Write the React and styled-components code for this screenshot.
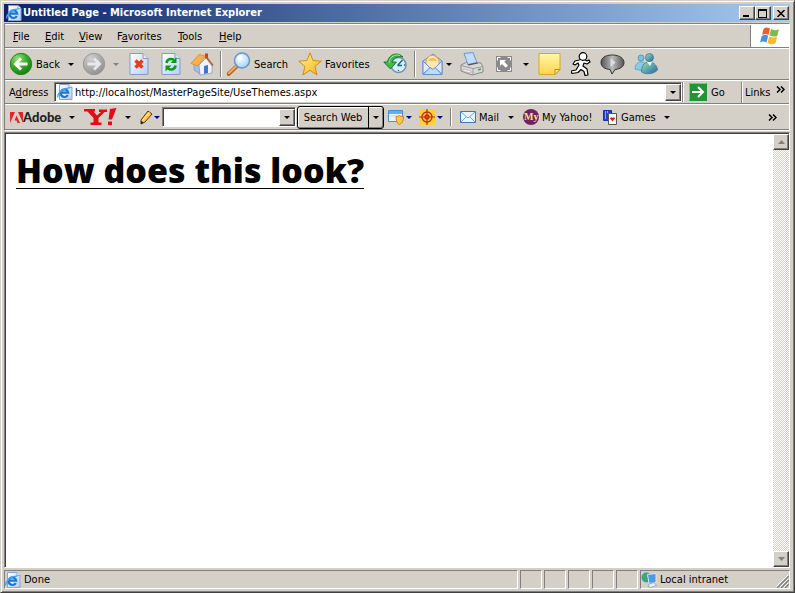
import React from "react";
import styled, { createGlobalStyle, css } from "styled-components";

const Global = createGlobalStyle`
  * { box-sizing: border-box; }
  body { margin: 0; background: #d4d0c8; }
  body, button, input { font-family: "DejaVu Sans Condensed", "DejaVu Sans", sans-serif; font-size: 11px; color: #000; }
  button { padding: 0; margin: 0; border: 0; background: transparent; cursor: default; white-space: nowrap; }
  svg { display: block; flex: none; }
`;

const raised = css`
  border: 1px solid;
  border-color: #fff #404040 #404040 #fff;
  box-shadow: inset -1px -1px 0 #808080;
  background: #d4d0c8;
`;

const Window = styled.div`
  display: flex;
  flex-direction: column;
  height: 100vh;
  padding: 3px 4px 2px 3px;
  background: #d4d0c8;
  border: 1px solid;
  border-color: #d4d0c8 #404040 #404040 #d4d0c8;
  box-shadow: inset 1px 1px 0 #fff, inset -1px -1px 0 #808080;
`;

const TitleBar = styled.header`
  display: flex;
  align-items: center;
  flex: none;
  height: 18px;
  padding: 0 1px 0 2px;
  gap: 1px;
  color: #fff;
  background: linear-gradient(90deg, #0a246a, #a6caf0);
`;

const Title = styled.h1`
  flex: 1;
  margin: 0;
  font-size: 11px;
  line-height: 18px;
  font-weight: bold;
  white-space: nowrap;
`;

const CaptionButton = styled.button`
  ${raised}
  display: flex;
  align-items: center;
  justify-content: center;
  width: 16px;
  height: 14px;
  margin-left: ${(p) => (p.$apart ? 2 : 0)}px;
  margin-right: -1px;
  &:last-child { margin-right: 0; }
`;

const Bands = styled.div`
  flex: none;
  margin-top: 1px;
  border: 1px solid;
  border-color: #808080 #fff #fff #808080;
`;

const Band = styled.div`
  display: flex;
  align-items: center;
  height: ${(p) => p.$h}px;
  padding-left: ${(p) => p.$pad ?? 4}px;
  border-top: 1px solid #fff;
  border-bottom: 1px solid #808080;
  overflow: hidden;
`;

const MenuButton = styled.button`
  height: 20px;
  padding: 0 8px;
  text-align: left;
  width: ${(p) => p.$w}px;
`;

const Flag = styled.div`
  display: flex;
  align-items: center;
  justify-content: center;
  align-self: stretch;
  width: 39px;
  margin-left: auto;
  background: #fff;
  border-left: 1px solid #808080;
`;

const Tool = styled.button`
  display: flex;
  align-items: center;
  flex: none;
  gap: ${(p) => p.$gap ?? 3}px;
  width: ${(p) => p.$w}px;
  height: 26px;
`;

const ToolLabel = styled.span`
  flex: ${(p) => (p.$grow ? 1 : "none")};
  text-align: left;
`;

const Rule = styled.span`
  flex: none;
  width: 2px;
  height: ${(p) => p.$h || 26}px;
  margin-right: ${(p) => p.$after}px;
  border-left: 1px solid #808080;
  border-right: 1px solid #fff;
`;

const Caret = styled.span`
  flex: none;
  width: 0;
  height: 0;
  margin-left: ${(p) => p.$before || 0}px;
  margin-right: ${(p) => p.$after || 0}px;
  border: 3px solid transparent;
  border-bottom-width: 0;
  border-top-color: ${(p) => p.$color || "#000"};
`;

const AddressLabel = styled.label`
  flex: none;
  width: 45px;
`;

const Field = styled.div`
  display: flex;
  align-items: center;
  flex: ${(p) => (p.$w ? "none" : 1)};
  width: ${(p) => (p.$w ? p.$w + "px" : "auto")};
  min-width: 0;
  height: 20px;
  padding-left: 2px;
  background: #fff;
  border: 1px solid;
  border-color: #808080 #fff #fff #808080;
  box-shadow: inset 1px 1px 0 #404040;
`;

const TextInput = styled.input`
  flex: 1;
  min-width: 0;
  height: 16px;
  padding: 0 2px;
  border: 0;
  outline: 0;
  background: transparent;
`;

const DropButton = styled.button`
  ${raised}
  display: flex;
  align-items: center;
  justify-content: center;
  flex: none;
  width: 16px;
  height: 17px;
`;

const LinksButton = styled.button`
  display: flex;
  justify-content: space-between;
  width: 48px;
  height: 21px;
  padding: 4px 4px 0 3px;
  border-left: 1px solid #808080;
  box-shadow: inset 1px 0 0 #fff;
`;

const Split = styled.div`
  display: flex;
  flex: none;
  width: 87px;
  height: 23px;
  margin: 0 4px 0 1px;
  border: 1px solid #000;
  border-radius: 3px;
  box-shadow: inset 1px 1px 0 #fff, inset -1px -1px 0 #808080;
`;

const SplitMain = styled.button`
  flex: 1;
  border-right: 1px solid #000;
`;

const SplitArrow = styled.button`
  display: flex;
  align-items: center;
  justify-content: center;
  width: 14px;
`;

const AdobeWord = styled.span`
  width: 39px;
  text-align: left;
  font-family: Lato, sans-serif;
  font-weight: 900;
  font-size: 13px;
  color: #222;
`;

const More = styled.button`
  width: 18px;
  height: 22px;
  margin-left: auto;
  margin-right: 8px;
  display: flex;
  align-items: center;
  justify-content: center;
`;

const Viewport = styled.div`
  display: flex;
  flex: 1;
  min-height: 0;
  margin-top: 1px;
  background: #fff;
  border: 1px solid;
  border-color: #808080 #fff #fff #808080;
  box-shadow: inset 1px 1px 0 #404040;
`;

const Page = styled.main`
  flex: 1;
  min-width: 0;
  padding: 19px 11px;
`;

const Heading = styled.h2`
  display: inline-block;
  margin: 0;
  border-bottom: 1px solid #000;
  font-family: "Open Sans", sans-serif;
  font-weight: 800;
  font-size: 34px;
  line-height: 36px;
  white-space: nowrap;
`;

const ScrollBar = styled.div`
  display: flex;
  flex-direction: column;
  justify-content: space-between;
  width: 16px;
  margin-top: 1px;
  background: repeating-conic-gradient(#fff 0 25%, #d4d0c8 0 50%) 0 0 / 2px 2px;
`;

const ScrollButton = styled.button`
  ${raised}
  display: flex;
  align-items: center;
  justify-content: center;
  width: 16px;
  height: 16px;
`;

const StatusBar = styled.footer`
  display: flex;
  align-items: stretch;
  flex: none;
  gap: 2px;
  height: 22px;
  padding-top: 2px;
`;

const Cell = styled.div`
  display: flex;
  align-items: center;
  gap: 3px;
  flex: ${(p) => (p.$w ? "none" : 1)};
  width: ${(p) => (p.$w ? p.$w + "px" : "auto")};
  height: 19px;
  border: 1px solid;
  border-color: #808080 #fff #fff #808080;
`;

const Grip = styled.span`
  align-self: flex-end;
  margin-left: auto;
`;

const DefsHolder = styled.div`
  height: 0;
  overflow: hidden;
`;

const Defs = () => (
  <svg width="0" height="0" aria-hidden="true">
    <defs>
      <radialGradient id="gGreen" cx="35%" cy="25%" r="80%"><stop offset="0" stopColor="#9be07e" /><stop offset=".5" stopColor="#3cab2b" /><stop offset="1" stopColor="#167a12" /></radialGradient>
      <radialGradient id="gGrey" cx="35%" cy="25%" r="80%"><stop offset="0" stopColor="#d0d0d0" /><stop offset="1" stopColor="#8f8f8f" /></radialGradient>
      <linearGradient id="gPage" x1="0" y1="0" x2="1" y2="1"><stop offset="0" stopColor="#fff" /><stop offset="1" stopColor="#b4cdf5" /></linearGradient>
      <linearGradient id="gStar" x1="0" y1="0" x2="1" y2="1"><stop offset="0" stopColor="#fff79a" /><stop offset="1" stopColor="#f7ae12" /></linearGradient>
      <radialGradient id="gLens" cx="40%" cy="35%" r="65%"><stop offset="0" stopColor="#fff" /><stop offset="1" stopColor="#9fd4f5" /></radialGradient>
      <linearGradient id="gBody" x1="0" y1="0" x2="1" y2="1"><stop offset="0" stopColor="#a9dc9a" /><stop offset=".5" stopColor="#5ba6b3" /><stop offset="1" stopColor="#2963a4" /></linearGradient>
      <linearGradient id="gNote" x1="0" y1="0" x2="0" y2="1"><stop offset="0" stopColor="#fff7a8" /><stop offset="1" stopColor="#ffd44d" /></linearGradient>
      <linearGradient id="gBubble"><stop offset="0" stopColor="#555" /><stop offset=".5" stopColor="#bbb" /><stop offset="1" stopColor="#555" /></linearGradient>
    </defs>
  </svg>
);

const Svg = ({ s = 24, w, h, vb, children }) => (
  <svg width={w || s} height={h || s} viewBox={vb || `0 0 ${w || s} ${h || s}`} aria-hidden="true">{children}</svg>
);

const IEPage = () => (
  <Svg s={16}>
    <path d="M2.500.5h9.500l3 3v12H2.500z" fill="url(#gPage)" stroke="#8ba4ce" />
    <path d="M12 .5v3h3" fill="#fff" stroke="#8ba4ce" />
    <path d="M10.800 11A3.800 3.800 0 1 1 11.200 8.600H4.500" fill="none" stroke="#1a78d0" strokeWidth="2.200" />
    <path d="M1 13.500C-.4 10 6 3.500 12.500 4.200" fill="none" stroke="#42a5ec" strokeWidth="1.300" />
  </Svg>
);

const RoundArrow = ({ grey, back }) => (
  <Svg>
    <circle cx="12" cy="12" r="10.700" fill={grey ? "url(#gGrey)" : "url(#gGreen)"} stroke={grey ? "#999" : "#268520"} />
    <path d={back ? "M18.500 12H7M12 6.500L6.500 12l5.500 5.500" : "M5.500 12H17M12 6.500l5.500 5.500-5.500 5.500"} fill="none" stroke={grey ? "#e8e8e8" : "#fff"} strokeWidth="2.800" />
  </Svg>
);

const PageShape = () => (
  <g>
    <path d="M1 1.500h13l5 5V22.500H1z" fill="url(#gPage)" stroke="#7f9ccb" />
    <path d="M14 1.500v5h5" fill="#dce8fc" stroke="#7f9ccb" />
  </g>
);

const Stop = () => (
  <Svg w={20} h={24}><PageShape /><path d="M6.500 8.500l7 7M13.500 8.500l-7 7" stroke="#e83b13" strokeWidth="3.200" /></Svg>
);

const Refresh = () => (
  <Svg w={20} h={24}>
    <PageShape />
    <path d="M5.500 11C6 7 10 6 13 8" fill="none" stroke="#109a1c" strokeWidth="2.600" />
    <path d="M15.500 5v6h-6z" fill="#109a1c" />
    <path d="M14.500 13.500C14 17.500 10 18.500 7 16.500" fill="none" stroke="#109a1c" strokeWidth="2.600" />
    <path d="M4.500 19.500v-6h6z" fill="#109a1c" />
  </Svg>
);

const Home = () => (
  <Svg>
    <path d="M15 1.500h3v6h-3z" fill="#c63e2b" />
    <path d="M4 11l6-3v14l-6-4z" fill="#a6b9e8" stroke="#7e92c6" strokeWidth=".7" />
    <path d="M9 13l7-7 6 8v7l-12 2z" fill="#edf3ff" stroke="#7e92c6" strokeWidth=".7" />
    <path d="M14 14l4-1v8l-4 1z" fill="#4377c4" />
    <path d="M9 2.500l6.500 1.500L8 14 .8 11.500z" fill="#f9ae50" stroke="#d7842e" strokeWidth=".7" />
    <path d="M15.500 4L23 13.500" stroke="#b85c25" strokeWidth="1.500" />
  </Svg>
);

const Search = () => (
  <Svg>
    <path d="M10 14l-8.500 8" stroke="#b66221" strokeWidth="4" strokeLinecap="round" />
    <path d="M10 13.500l-8 7.500" stroke="#f5ad55" strokeWidth="2" strokeLinecap="round" />
    <circle cx="15" cy="8.500" r="7.500" fill="url(#gLens)" stroke="#6794d4" strokeWidth="1.500" />
    <path d="M11 8c0-3 2-4 4-4" fill="none" stroke="#fff" strokeWidth="1.500" />
  </Svg>
);

const Star = () => (
  <Svg><path d="M12 .8l3 7.700 8.300.7-6.300 5.300 2 8.500-7-4.700L4.800 23l2.200-8.500L.8 9.200 9 8.500z" fill="url(#gStar)" stroke="#d28b16" strokeLinejoin="round" /></Svg>
);

const History = () => (
  <Svg>
    <circle cx="15.500" cy="13" r="7.500" fill="#d5eefb" stroke="#6794b4" strokeWidth="1.500" />
    <path d="M20 5C14-.5 6 2 4.500 10H.8l6.700 7 6-7H9c.8-4 5-6 11-5z" fill="#45b84b" stroke="#167923" />
    <path d="M17 3.500C12 2 7 4 6 11" fill="none" stroke="#a6e49b" />
    <path d="M14.500 13.500l5-5.500M14.500 13.500H19M15.500 18v1M21 13h1" fill="none" stroke="#245985" strokeWidth="1.300" />
  </Svg>
);

const MailTool = () => (
  <Svg w={21} h={24}>
    <path d="M1 9l10-7 9 7v13H1z" fill="#b9d3f8" stroke="#678dd0" />
    <path d="M4 9c2-7 10-8 13 0v5l-6 4-7-5z" fill="#ffe8a3" stroke="#d9a251" />
    <path d="M6 9c2-4 7-4 9 0z" fill="#f3bd68" />
    <path d="M1 9l7 7-7 6zM20 9l-7 7 7 6z" fill="#dcebff" stroke="#678dd0" />
    <path d="M1 22.500l7-7 3 2 2-2 7 7z" fill="#c0dbfa" stroke="#678dd0" />
  </Svg>
);

const Printer = () => (
  <Svg>
    <path d="M1 13l6-3 14 1 2 4v5l-11 3-11-4z" fill="#d9d9d9" stroke="#888" />
    <path d="M4 1.500l9-1 4 10-9 2z" fill="#c1dcff" stroke="#6d96d8" />
    <path d="M1 13.500l12 3 10-2M13 17v6" fill="none" stroke="#999" />
    <path d="M7 12.500l10-2 1 1-9 2z" fill="#555" />
    <path d="M3 17l8 2v2l-8-2z" fill="#f7f7f7" stroke="#999" strokeWidth=".5" />
    <path d="M18 18l3-1" stroke="#48a442" strokeWidth="1.500" />
  </Svg>
);

const Expand = () => (
  <Svg s={16}>
    <path d="M0 0h16v16H0z" fill="#8a8a8a" />
    <path d="M1.500 4.500v-3h3M11.500 1.500h3v3M14.500 11.500v3h-3M4.500 14.500h-3v-3" fill="none" stroke="#fff" />
    <path d="M4 4h6L8.200 5.800l3.800 3.800-2.200 2.200L6 8 4 10z" fill="#fff" />
  </Svg>
);

const Note = () => (
  <Svg w={23} h={24}>
    <path d="M1 1.500h21v16l-5 5H1z" fill="url(#gNote)" stroke="#dfa621" />
    <path d="M22 17.500h-5v5z" fill="#ffe783" stroke="#c98e18" />
  </Svg>
);

const Runner = () => (
  <Svg w={20} h={24}>
    <path d="M8 8L4 9l-2 3 2 1 3-2 1 2-3 5-5 1 1 2.500 6-1 3-3 3 2 1 4 3-.5-1-6-4-3 1-3 3 1 3-2-1-2-2 1-4-2.500z" fill="#fff" stroke="#000" strokeWidth="1.200" strokeLinejoin="round" />
    <circle cx="12" cy="4.500" r="3.800" fill="#fff" stroke="#000" strokeWidth="1.200" />
  </Svg>
);

const Bubble = () => (
  <Svg w={25} h={24}>
    <path d="M12.500 3C5 3 1 6 1 10.500S5 17 10 17.500l2 4.500 3-4.500c6-.5 9-3.500 9-7S20 3 12.500 3z" fill="url(#gBubble)" stroke="#333" />
    <path d="M10.500 6l5 4.500-5 4.500z" fill="#ddd" />
  </Svg>
);

const People = () => (
  <Svg>
    <circle cx="7" cy="6" r="3" fill="#79c3df" stroke="#4985ad" strokeWidth=".7" />
    <path d="M1 17c0-9 11-10 12-1l-4 3z" fill="#8acbe6" stroke="#5094b1" strokeWidth=".7" />
    <circle cx="15.500" cy="5.500" r="4" fill="url(#gBody)" stroke="#39718c" strokeWidth=".7" />
    <path d="M7.500 20c0-6 2-10 8-10 5 0 8 5 8 8-3 4-12 5-16 2z" fill="url(#gBody)" stroke="#39718c" strokeWidth=".7" />
    <path d="M13 10l3 4 2-4z" fill="#e7fff3" />
  </Svg>
);

const WinFlag = () => (
  <Svg w={20} h={20}>
    <path d="M3.500 3c2-2 4-2 6.500-.5L8.500 9C6 7.500 4 8 2 9z" fill="#e95f2e" />
    <path d="M11 3c3 1.500 5 1.500 8 .2L17.200 10c-3 1-5 .5-7.700-.7z" fill="#7dbb42" />
    <path d="M1.700 10c2-1.500 4-1.500 6.500-.2L6.500 16.500C4 15 2 15.500 0 16.500z" fill="#4b8fe0" />
    <path d="M9.200 10.500c3 1.300 5 1.300 8 .2l-1.800 6.800c-3 1.200-5 .8-8-.5z" fill="#f8bc24" />
  </Svg>
);

const GoIcon = () => (
  <Svg w={18} h={18}>
    <path d="M0 0h18v18H0z" fill="#249336" />
    <path d="M.5 17.500V.5h17" fill="none" stroke="#72c978" />
    <path d="M3 9h11M9 4l5 5-5 5" fill="none" stroke="#fff" strokeWidth="2" />
  </Svg>
);

const Chevrons = () => (
  <Svg w={9} h={7}><path d="M1 .5l3 3-3 3M5 .5l3 3-3 3" fill="none" stroke="#000" strokeWidth="1.500" /></Svg>
);

const AdobeMark = () => (
  <Svg w={13} h={11}><path d="M0 0h5L0 11zM8 0h5v11zM6.500 3.500L10 11H7.500L6.500 8.500H4.500z" fill="#e32424" /></Svg>
);

const YahooMark = () => (
  <Svg w={33} h={18}>
    <path d="M0 1h11v2.500H9.500l3.500 4 4-3.500h-2V1.500h8V4h-2.500L14.500 10v4.500h3V17H6.500v-2.500h3V10L3.500 3.500H0z" fill="#e20b17" />
    <path d="M26 1l6.500-1-4.500 11.500h-3.500zM24 13.500h4V17h-4z" fill="#e20b17" />
  </Svg>
);

const Pencil = () => (
  <Svg w={13} h={15}>
    <path d="M1 10L8 1l4 3-7 8-4 2z" fill="#ffc64a" stroke="#5b3410" />
    <path d="M2.500 10.500l7-8" stroke="#fff1a8" />
    <path d="M1 11l3 1.500L1 14z" fill="#222" />
  </Svg>
);

const Shield = () => (
  <Svg s={16}>
    <path d="M.5 1.500h14v11H.5z" fill="#e8f4ff" stroke="#4a8cd8" />
    <path d="M1 2h13v3H1z" fill="#62aff1" />
    <path d="M1 7h13" stroke="#b5dafa" />
    <path d="M8 7.500c2 0 3-1 3.500-1 1 1 2 1 4 1 0 4-1 6.500-4 8-3-1.500-3.500-4-3.500-8z" fill="#ffc84a" stroke="#d78214" />
  </Svg>
);

const Target = () => (
  <Svg s={16}>
    <path d="M0 0h16v16H0z" fill="#ffd23b" />
    <circle cx="8" cy="8" r="5" fill="none" stroke="#bd2c12" strokeWidth="1.300" />
    <circle cx="8" cy="8" r="2" fill="none" stroke="#bd2c12" strokeWidth="1.300" />
    <path d="M8 0v16M0 8h16" stroke="#bd2c12" strokeWidth="1.200" />
  </Svg>
);

const Envelope = () => (
  <Svg w={16} h={12}>
    <path d="M.5.500h15v11H.5z" fill="#e8f5ff" stroke="#3e76b8" />
    <path d="M1 1l7 6 7-6M1 11l5-5M15 11l-5-5" fill="none" stroke="#6ca3d8" />
  </Svg>
);

const MyLetters = styled.text`
  font-family: "Liberation Serif", serif;
  font-weight: bold;
  font-size: 10px;
  fill: #ffe36b;
`;

const MyIcon = () => (
  <Svg s={16}><circle cx="8" cy="8" r="8" fill="#702068" /><MyLetters x="1" y="11">My</MyLetters></Svg>
);

const Cards = () => (
  <Svg w={15} h={16}>
    <path d="M.5 1.500h8v10h-8z" fill="#2442c5" stroke="#16329e" />
    <path d="M2 3h1M4 3h1M2 5h1M2 7h1M2 9h1" stroke="#fff" />
    <path d="M5.500 4.500h8v11h-8z" fill="#fff" stroke="#555" />
    <path d="M9.500 12.500L7 9.500l1-1.500 1.500 1L11 8l1 1.500z" fill="#dc1f1f" />
  </Svg>
);

const Intranet = () => (
  <Svg s={16}>
    <circle cx="5.500" cy="5.500" r="5" fill="#3197d8" />
    <path d="M1 5C2 1 5 0 8 1.500L5 4.500l1 4-3 1z" fill="#43ad4e" />
    <path d="M6.500 2.500l8.500-1v9l-7 1z" fill="#4b9ae7" stroke="#d6e5f5" />
    <path d="M8 12l5-1.500 2.500 3L10 15.500 7 14.500z" fill="#e7edf3" stroke="#8294ad" strokeWidth=".7" />
  </Svg>
);

const MENUS = [
  ["", "F", "ile", 32], ["", "E", "dit", 34], ["", "V", "iew", 38],
  ["F", "a", "vorites", 61], ["", "T", "ools", 41], ["", "H", "elp", 40],
];

export default function App() {
  return (
    <Window>
      <Global />
      <DefsHolder><Defs /></DefsHolder>
      <TitleBar>
        <IEPage />
        <Title>Untitled Page - Microsoft Internet Explorer</Title>
        <CaptionButton aria-label="Minimize"><Svg w={10} h={8}><path d="M1 6h6v2H1z" /></Svg></CaptionButton>
        <CaptionButton aria-label="Maximize"><Svg w={10} h={9}><path d="M0 0h9v9H0zM1 2v6h7V2z" fillRule="evenodd" /></Svg></CaptionButton>
        <CaptionButton $apart aria-label="Close"><Svg w={8} h={7}><path d="M.5 0l7 7M7.500 0l-7 7" stroke="#000" strokeWidth="1.500" /></Svg></CaptionButton>
      </TitleBar>

      <Bands>
        <Band as="nav" $h={24} $pad={0}>
          {MENUS.map(([a, k, b, w]) => <MenuButton key={k} $w={w}>{a}<u>{k}</u>{b}</MenuButton>)}
          <Flag><WinFlag /></Flag>
        </Band>

        <Band $h={32}>
          <Tool $w={73}><RoundArrow back /><ToolLabel>Back</ToolLabel><Caret $before={5} /></Tool>
          <Tool $w={47} aria-label="Forward"><RoundArrow grey /><Caret $color="#808080" $before={4} /></Tool>
          <Tool $w={32} aria-label="Stop"><Stop /></Tool>
          <Tool $w={29} aria-label="Refresh"><Refresh /></Tool>
          <Tool $w={30} aria-label="Home"><Home /></Tool>
          <Rule $after={5} />
          <Tool $w={71}><Search /><ToolLabel>Search</ToolLabel></Tool>
          <Tool $w={85}><Star /><ToolLabel>Favorites</ToolLabel></Tool>
          <Tool $w={31} aria-label="History"><History /></Tool>
          <Rule $after={6} />
          <Tool $w={38} aria-label="Mail"><MailTool /><Caret /></Tool>
          <Tool $w={36} aria-label="Print"><Printer /></Tool>
          <Tool $w={42} aria-label="Edit"><Expand /><Caret $before={8} /></Tool>
          <Tool $w={33} aria-label="Discuss"><Note /></Tool>
          <Tool $w={29} aria-label="AIM"><Runner /></Tool>
          <Tool $w={34} aria-label="Chat"><Bubble /></Tool>
          <Tool $w={24} aria-label="Messenger"><People /></Tool>
        </Band>

        <Band $h={24}>
          <AddressLabel htmlFor="address">A<u>d</u>dress</AddressLabel>
          <Field>
            <IEPage />
            <TextInput id="address" defaultValue="http://localhost/MasterPageSite/UseThemes.aspx" />
            <DropButton aria-label="Show addresses"><Caret /></DropButton>
          </Field>
          <Rule $after={5} $h={20} />
          <Tool $w={52} $gap={4}><GoIcon /><ToolLabel>Go</ToolLabel></Tool>
          <LinksButton>Links<Chevrons /></LinksButton>
        </Band>

        <Band $h={26} $pad={5}>
          <Tool $w={74} $gap={0} aria-label="Adobe"><AdobeMark /><AdobeWord>Adobe</AdobeWord><Caret $before={7} /></Tool>
          <Tool $w={56} aria-label="Yahoo!"><YahooMark /><Caret $before={5} /></Tool>
          <Tool $w={22} $gap={1} aria-label="Highlight"><Pencil /><Caret $color="#00008b" /></Tool>
          <Field $w={134}>
            <TextInput aria-label="Search terms" />
            <DropButton aria-label="Recent searches"><Caret /></DropButton>
          </Field>
          <Split>
            <SplitMain>Search Web</SplitMain>
            <SplitArrow aria-label="Search options"><Caret /></SplitArrow>
          </Split>
          <Tool $w={31} $gap={2} aria-label="Pop-up blocker"><Shield /><Caret $color="#00008b" /></Tool>
          <Tool $w={31} $gap={2} aria-label="Anti-spy"><Target /><Caret $color="#00008b" /></Tool>
          <Rule $after={8} $h={18} />
          <Tool $w={63}><Envelope /><ToolLabel $grow>Mail</ToolLabel><Caret $after={9} /></Tool>
          <Tool $w={80}><MyIcon /><ToolLabel>My Yahoo!</ToolLabel></Tool>
          <Tool $w={67}><Cards /><ToolLabel $grow>Games</ToolLabel><Caret /></Tool>
          <More aria-label="More"><Chevrons /></More>
        </Band>
      </Bands>

      <Viewport>
        <Page><Heading>How does this look?</Heading></Page>
        <ScrollBar>
          <ScrollButton aria-label="Scroll up"><Svg w={7} h={4}><path d="M3.500 0L7 4H0z" fill="#808080" /></Svg></ScrollButton>
          <ScrollButton aria-label="Scroll down"><Svg w={7} h={4}><path d="M0 0h7L3.500 4z" fill="#808080" /></Svg></ScrollButton>
        </ScrollBar>
      </Viewport>

      <StatusBar>
        <Cell><IEPage />Done</Cell>
        <Cell $w={22} /><Cell $w={22} /><Cell $w={22} /><Cell $w={22} /><Cell $w={22} />
        <Cell $w={150}>
          <Intranet />Local intranet
          <Grip><Svg w={13} h={13}><path d="M1 13L13 1M5 13l8-8M9 13l4-4" stroke="#808080" strokeWidth="1.500" /><path d="M0 12L12 0M4 12l8-8M8 12l4-4" stroke="#fff" /></Svg></Grip>
        </Cell>
      </StatusBar>
    </Window>
  );
}
